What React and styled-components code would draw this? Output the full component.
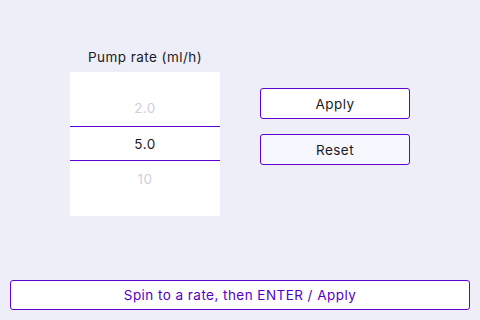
import React from "react";
import styled, { createGlobalStyle } from "styled-components";

const Global = createGlobalStyle`
  html, body { margin: 0; padding: 0; }
  body {
    width: 480px; height: 320px; overflow: hidden;
    background: #eeeef8;
    font-family: "Inter", "Noto Sans", sans-serif;
    letter-spacing: 0.45px;
  }
`;

const Screen = styled.div`
  width: 480px; height: 320px; box-sizing: border-box;
  display: flex; flex-direction: column;
  padding: 0 10px 10px;
`;

const Main = styled.div`
  flex: 1;
  display: flex;
  align-items: flex-start;
  padding-left: 60px;
  gap: 40px;
`;

const PickerCol = styled.div`
  display: flex; flex-direction: column; align-items: center;
  width: 150px;
  padding-top: 48px;
`;

const Label = styled.div`
  font-size: 13.5px; color: #1a1a24; height: 24px; line-height: 18px;
  white-space: nowrap;
`;

const Wheel = styled.div`
  width: 150px; height: 144px; background: #ffffff;
  display: flex; flex-direction: column;
`;

const Item = styled.div`
  height: ${p => p.$h}px;
  display: flex; align-items: ${p => p.$align};
  justify-content: center;
  font-size: 13.5px;
  color: ${p => (p.$selected ? "#1a1a24" : "#cfcfdc")};
  box-sizing: border-box;
  border-top: ${p => (p.$selected ? "1px solid #6100cf" : "none")};
  border-bottom: ${p => (p.$selected ? "1px solid #6100cf" : "none")};
  padding: ${p => p.$pad};
`;

const Buttons = styled.div`
  display: flex; flex-direction: column; gap: 15px;
  padding-top: 88px;
`;

const Button = styled.button`
  width: 150px; height: 31px;
  border: 1px solid #6100cf; border-radius: 3px;
  background: ${p => (p.$soft ? "#f7f7ff" : "#ffffff")};
  font-family: inherit; font-size: 13.5px; color: #1a1a24;
  letter-spacing: inherit;
  padding: 0;
`;

const Hint = styled.div`
  height: 30px; box-sizing: border-box;
  border: 1px solid #6100cf; border-radius: 3px;
  background: #ffffff;
  display: flex; align-items: center; justify-content: center;
  font-size: 13.5px; color: #5500c4;
`;

export default function App() {
  return (
    <>
      <Global />
      <Screen>
        <Main>
          <PickerCol>
            <Label>Pump rate (ml/h)</Label>
            <Wheel>
              <Item $h={54} $align="flex-end" $pad="0 0 10px">2.0</Item>
              <Item $h={35} $align="center" $selected $pad="0">5.0</Item>
              <Item $h={55} $align="flex-start" $pad="10px 0 0">10</Item>
            </Wheel>
          </PickerCol>
          <Buttons>
            <Button>Apply</Button>
            <Button $soft>Reset</Button>
          </Buttons>
        </Main>
        <Hint>Spin to a rate, then ENTER / Apply</Hint>
      </Screen>
    </>
  );
}
